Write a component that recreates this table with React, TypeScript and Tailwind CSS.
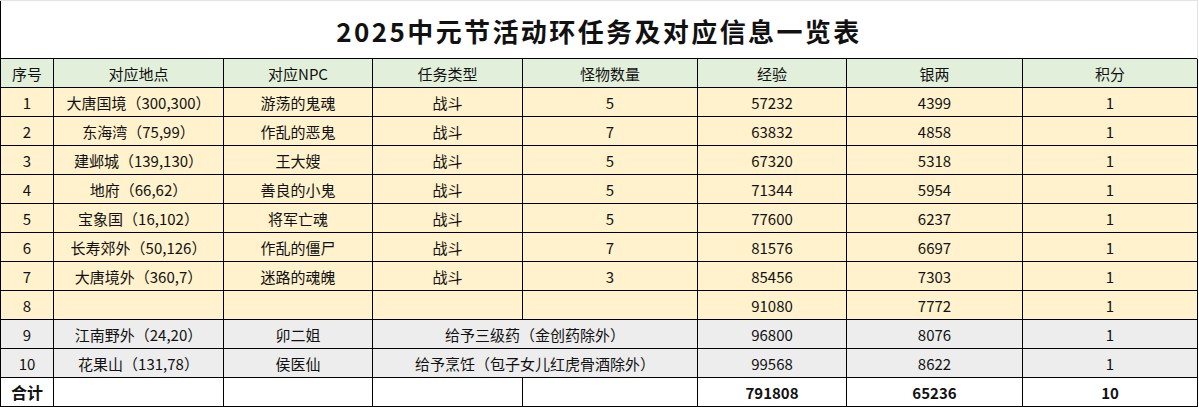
import React from "react";

type Row = {
  no: string;
  place: string;
  npc: string;
  type: string;
  count: string;
  exp: string;
  silver: string;
  score: string;
  merged?: boolean;
  gray?: boolean;
};

const rows: Row[] = [
  { no: "1", place: "大唐国境（300,300）", npc: "游荡的鬼魂", type: "战斗", count: "5", exp: "57232", silver: "4399", score: "1" },
  { no: "2", place: "东海湾（75,99）", npc: "作乱的恶鬼", type: "战斗", count: "7", exp: "63832", silver: "4858", score: "1" },
  { no: "3", place: "建邺城（139,130）", npc: "王大嫂", type: "战斗", count: "5", exp: "67320", silver: "5318", score: "1" },
  { no: "4", place: "地府（66,62）", npc: "善良的小鬼", type: "战斗", count: "5", exp: "71344", silver: "5954", score: "1" },
  { no: "5", place: "宝象国（16,102）", npc: "将军亡魂", type: "战斗", count: "5", exp: "77600", silver: "6237", score: "1" },
  { no: "6", place: "长寿郊外（50,126）", npc: "作乱的僵尸", type: "战斗", count: "7", exp: "81576", silver: "6697", score: "1" },
  { no: "7", place: "大唐境外（360,7）", npc: "迷路的魂魄", type: "战斗", count: "3", exp: "85456", silver: "7303", score: "1" },
  { no: "8", place: "", npc: "", type: "", count: "", exp: "91080", silver: "7772", score: "1" },
  { no: "9", place: "江南野外（24,20）", npc: "卯二姐", type: "给予三级药（金创药除外）", count: "", exp: "96800", silver: "8076", score: "1", merged: true, gray: true },
  { no: "10", place: "花果山（131,78）", npc: "侯医仙", type: "给予烹饪（包子女儿红虎骨酒除外）", count: "", exp: "99568", silver: "8622", score: "1", merged: true, gray: true },
];

const headers = ["序号", "对应地点", "对应NPC", "任务类型", "怪物数量", "经验", "银两", "积分"];
const widths = [53, 170, 149, 150, 175, 149, 176, 175];

const cell = "border border-black p-0 text-center align-middle whitespace-nowrap";

export default function App() {
  return (
    <div className="min-h-[407px] w-[1199px] bg-white text-[15px] leading-none text-[#111] [font-family:'Noto_Sans_CJK_SC',sans-serif]">
      <table className="w-[1198px] table-fixed border-collapse">
        <colgroup>
          {widths.map((w, i) => (
            <col key={i} style={{ width: w }} />
          ))}
        </colgroup>
        <tbody>
          <tr className="h-[58px]">
            <td
              colSpan={8}
              className="border-t border-r border-l border-t-[#e3e3e3] border-r-[#e3e3e3] border-l-black p-0 pt-[3px] text-center text-[26px] font-bold tracking-[2.4px] text-[#111]"
            >
              2025中元节活动环任务及对应信息一览表
            </td>
          </tr>
          <tr className="h-[29px] bg-[#e2efda]">
            {headers.map((h) => (
              <td key={h} className={cell}>
                {h}
              </td>
            ))}
          </tr>
          {rows.map((r) => (
            <tr key={r.no} className={`h-[29px] ${r.gray ? "bg-[#ededed]" : "bg-[#fff2cc]"}`}>
              <td className={cell}>{r.no}</td>
              <td className={cell}>{r.place}</td>
              <td className={cell}>{r.npc}</td>
              {r.merged ? (
                <td colSpan={2} className={cell}>
                  {r.type}
                </td>
              ) : (
                <>
                  <td className={cell}>{r.type}</td>
                  <td className={cell}>{r.count}</td>
                </>
              )}
              <td className={cell}>{r.exp}</td>
              <td className={cell}>{r.silver}</td>
              <td className={cell}>{r.score}</td>
            </tr>
          ))}
          <tr className="h-[29px] bg-white font-bold">
            <td className={`${cell} text-[16px]`}>合计</td>
            <td className={cell}></td>
            <td className={cell}></td>
            <td className={cell}></td>
            <td className={cell}></td>
            <td className={cell}>791808</td>
            <td className={cell}>65236</td>
            <td className={cell}>10</td>
          </tr>
        </tbody>
      </table>
    </div>
  );
}
